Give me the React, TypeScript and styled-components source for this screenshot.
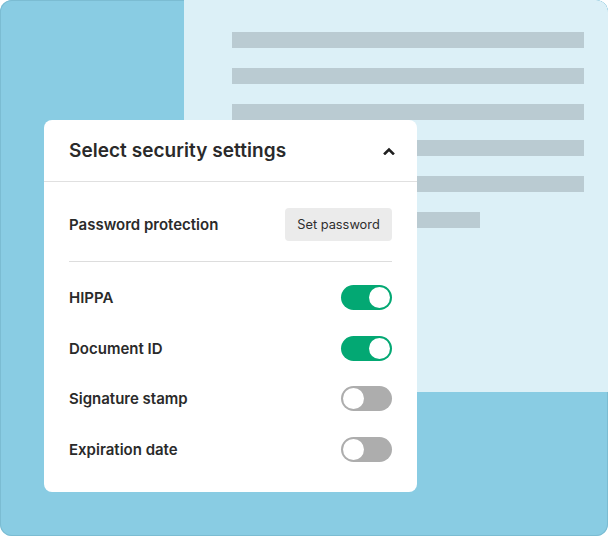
import { useState } from 'react';
import styled, { createGlobalStyle } from 'styled-components';

const GlobalStyle = createGlobalStyle`
  body {
    margin: 0;
    font-family: Inter, "Open Sans", sans-serif;
    -webkit-font-smoothing: antialiased;
  }
`;

const Frame = styled.div`
  position: relative;
  width: 608px;
  height: 536px;
  box-sizing: border-box;
  border-radius: 12px;
  background-color: #89CCE3;
  box-shadow: inset 0 0 0 1px #7BBCD2;
  overflow: hidden;
`;

const Document = styled.div`
  display: flex;
  flex-direction: column;
  gap: 20px;
  margin-left: 184px;
  height: 392px;
  box-sizing: border-box;
  padding: 32px 24px 0 48px;
  background-color: #DCF0F7;
  border-top-right-radius: 12px;
`;

const TextLine = styled.div<{ $width?: number }>`
  height: 16px;
  width: ${p => (p.$width ? `${p.$width}px` : '100%')};
  background-color: #BACBD2;
`;

const Card = styled.div`
  position: absolute;
  left: 44px;
  top: 120px;
  width: 373px;
  height: 372px;
  background-color: #FFFFFF;
  border-radius: 8px;
  display: flex;
  flex-direction: column;
`;

const CardHeader = styled.div`
  display: flex;
  align-items: center;
  justify-content: space-between;
  height: 61px;
  padding: 0 22px 0 25px;
  border-bottom: 1px solid #E0E0E0;
`;

const Title = styled.div`
  font-size: 19px;
  font-weight: 600;
  color: #2A2A2A;
  letter-spacing: 0.05px;
`;

const CardBody = styled.div`
  display: flex;
  flex-direction: column;
  padding: 0 25px;
`;

const PasswordRow = styled.div`
  display: flex;
  align-items: center;
  justify-content: space-between;
  padding: 26px 0 20px;
  border-bottom: 1px solid #DDDDDD;
`;

const ToggleList = styled.div`
  display: flex;
  flex-direction: column;
  padding-top: 10px;
`;

const ToggleRow = styled.div`
  display: flex;
  align-items: center;
  justify-content: space-between;
  height: 50.7px;
`;

const Label = styled.div`
  font-size: 15px;
  font-weight: 600;
  color: #2A2A2A;
`;

const Button = styled.button`
  height: 33px;
  width: 107px;
  padding: 0;
  border: none;
  border-radius: 4px;
  background-color: #EBEBEB;
  font-family: inherit;
  font-size: 12.8px;
  color: #2E2E2E;
  cursor: pointer;
`;

const Switch = styled.button<{ $on: boolean }>`
  position: relative;
  width: 51px;
  height: 25px;
  padding: 0;
  border: none;
  border-radius: 13px;
  background-color: ${p => (p.$on ? '#03A873' : '#ADADAD')};
  cursor: pointer;

  &::after {
    content: '';
    position: absolute;
    top: 2px;
    left: ${p => (p.$on ? '28px' : '2px')};
    width: 21px;
    height: 21px;
    box-sizing: border-box;
    border-radius: 50%;
    background-color: #FFFFFF;
  }
`;

const ChevronUp = () => (
  <svg width="12" height="8" viewBox="0 0 12 8" fill="none">
    <path d="M2 6.5 L6 2.5 L10 6.5" stroke="#1F1F1F" strokeWidth="2.6" strokeLinecap="square" />
  </svg>
);

const settings = [
  { name: 'HIPPA', on: true },
  { name: 'Document ID', on: true },
  { name: 'Signature stamp', on: false },
  { name: 'Expiration date', on: false },
];

const App = () => {
  const [values, setValues] = useState(settings.map(s => s.on));

  const flip = (i: number) =>
    setValues(v => v.map((x, j) => (j === i ? !x : x)));

  return (
    <>
      <GlobalStyle />
      <Frame>
        <Document>
          <TextLine />
          <TextLine />
          <TextLine />
          <TextLine />
          <TextLine />
          <TextLine $width={248} />
        </Document>
        <Card>
          <CardHeader>
            <Title>Select security settings</Title>
            <ChevronUp />
          </CardHeader>
          <CardBody>
            <PasswordRow>
              <Label>Password protection</Label>
              <Button>Set password</Button>
            </PasswordRow>
            <ToggleList>
              {settings.map((s, i) => (
                <ToggleRow key={s.name}>
                  <Label>{s.name}</Label>
                  <Switch $on={values[i]} onClick={() => flip(i)} />
                </ToggleRow>
              ))}
            </ToggleList>
          </CardBody>
        </Card>
      </Frame>
    </>
  );
};

export default App;
